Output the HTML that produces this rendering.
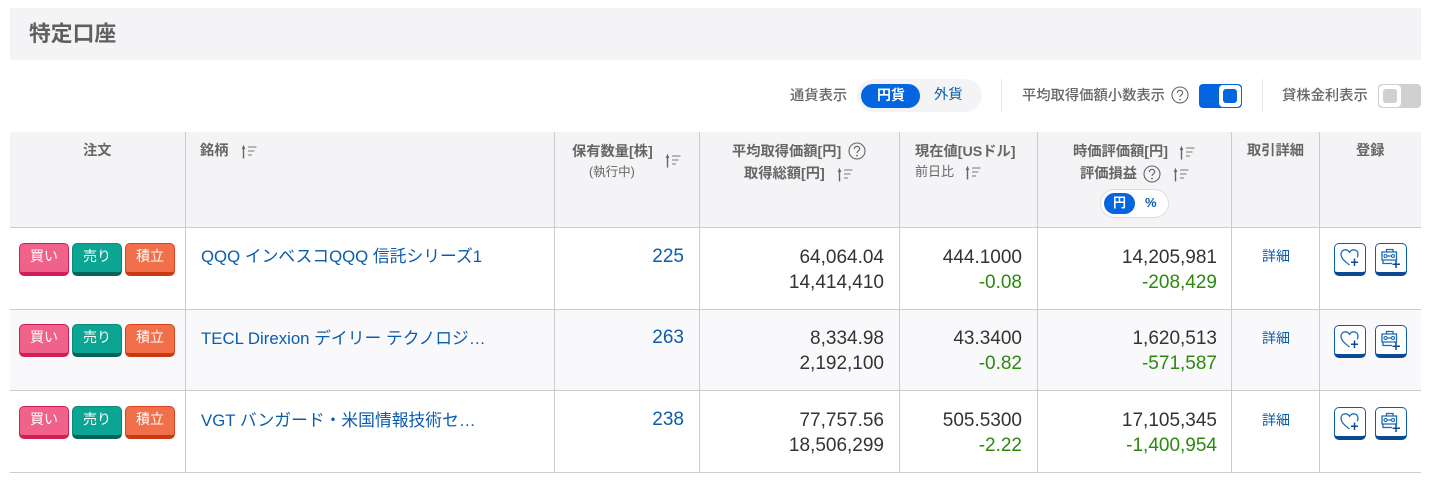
<!DOCTYPE html>
<html lang="ja"><head><meta charset="utf-8"><title>特定口座</title>
<style>
*{box-sizing:border-box}
html,body{margin:0;padding:0;background:#fff}
body{width:1433px;height:482px;position:relative;overflow:hidden;font-family:"Liberation Sans","Noto Sans CJK JP",sans-serif;color:#666}
.a{position:absolute;white-space:nowrap}
.bg{position:absolute}
.v{position:absolute;width:1px;background:#ccc}
.h{position:absolute;left:10px;width:1411px;height:1px;background:#ccc}
.th{font-size:14.25px;font-weight:700;color:#666;line-height:18px}
.sub{font-size:13px;color:#666;line-height:18px;font-weight:400}
.n{font-size:19px;line-height:24px;color:#333;text-align:right;margin-top:2px}
.g{color:#2b8a0e}
.q{color:#0a5cad}
.name{font-size:16.8px;line-height:24px;color:#0a5cad}
.btn{position:absolute;width:50px;height:33px;border-radius:5px;color:#fff;font-size:14px;line-height:25px;text-align:center;border:1px solid;border-bottom-width:4px}
.buy{background:#f06289;border-color:#d01f58}
.sell{background:#0ca492;border-color:#0a8a7c #0a8a7c #05635a}
.acc{background:#f26f4b;border-color:#d8451c #d8451c #c93a12}
.ib{position:absolute;width:32px;height:33px;border:1.5px solid #0a5cad;border-bottom:4px solid #0a4a94;border-radius:5px;background:#fff}
.ib svg{position:absolute;left:3px;top:3px}
.det{font-size:14px;color:#0a5cad;line-height:18px}
.ct{font-size:14.3px;line-height:18px;color:#666;font-weight:500}
</style></head><body>
<svg width="0" height="0" style="position:absolute"><defs>
<symbol id="s" viewBox="0 0 18 15"><path d="M3.500 14.500V3" stroke="#666" stroke-width="1.400"/><path d="M1.700 5L3.500 .8 5.300 5z" fill="#666"/><path d="M8 3h8.500M8 7h6.500M8 11h4" stroke="#777" stroke-width="1" fill="none"/></symbol>
<symbol id="q" viewBox="0 0 18 18"><circle cx="9" cy="9" r="8" fill="none" stroke="#666" stroke-width="1.100"/><path d="M6.300 7c0-1.600 1.200-2.600 2.700-2.600s2.700 1 2.700 2.400c0 2-2.700 2.100-2.700 4.200" fill="none" stroke="#666" stroke-width="1.200"/><circle cx="9" cy="13.600" r=".9" fill="#666"/></symbol>
<symbol id="h" viewBox="0 0 24 24"><path d="M11.500 18C7 14.500 3 11.500 3 7 3 4.500 5 2.800 7.300 2.800c1.800 0 3.200.9 4.200 2.500 1-1.600 2.400-2.500 4.200-2.500 2.300 0 4.300 1.700 4.300 4.200 0 1.200-.3 2.300-.8 3.300" fill="none" stroke="#1c6ab5" stroke-width="1.300"/><path d="M16.500 11.500V19M13 15.200h7" stroke="#0a4a94" stroke-width="1.500"/></symbol>
<symbol id="b" viewBox="0 0 24 24"><path d="M7.500 5V2.500H14V5M3 5h14.500v8H3zM4 13v3.500h9M7 9h7" fill="none" stroke="#1c6ab5" stroke-width="1.300"/><circle cx="6.500" cy="9" r="1.500" fill="#fff" stroke="#1c6ab5" stroke-width="1.100"/><circle cx="14" cy="9" r="1.500" fill="#fff" stroke="#1c6ab5" stroke-width="1.100"/><path d="M17 13.500V21M13.500 17.200H21" stroke="#0a4a94" stroke-width="1.500"/></symbol>
</defs></svg>

<div class="bg" style="left:10px;top:8px;width:1411px;height:52px;background:#f4f4f7"></div>
<div class="a" style="left:29px;top:20px;font-size:21.8px;font-weight:700;line-height:28px;color:#5f5f5f">特定口座</div>

<!-- controls -->
<div class="a ct" style="left:790px;top:87px">通貨表示</div>
<div class="bg" style="left:857px;top:79px;width:125px;height:33px;border-radius:17px;background:#f4f4f7"></div>
<div class="bg" style="left:861px;top:84px;width:59px;height:24px;border-radius:12px;background:#0366e0"></div>
<div class="a" style="left:877px;top:86px;font-size:14px;line-height:18px;color:#fff;font-weight:700">円貨</div>
<div class="a" style="left:934px;top:86px;font-size:14.3px;line-height:18px;color:#0a5cad">外貨</div>
<div class="v" style="left:1001px;top:79px;height:33px;background:#e6e6e6"></div>
<div class="a ct" style="left:1022px;top:87px">平均取得価額小数表示</div>
<svg class="a" style="left:1171px;top:86px" width="18" height="18"><use href="#q"/></svg>
<div class="bg" style="left:1199px;top:84px;width:43px;height:24px;border-radius:4px;background:#0366e0"></div>
<div class="bg" style="left:1219px;top:85px;width:22px;height:22px;border-radius:4px;background:#fff"></div>
<div class="bg" style="left:1223px;top:89px;width:14px;height:14px;border-radius:3px;background:#0366e0"></div>
<div class="v" style="left:1262px;top:79px;height:33px;background:#e6e6e6"></div>
<div class="a ct" style="left:1282px;top:87px">貸株金利表示</div>
<div class="bg" style="left:1378px;top:84px;width:43px;height:24px;border-radius:4px;background:#d0d0d0"></div>
<div class="bg" style="left:1379px;top:85px;width:22px;height:22px;border-radius:4px;background:#fff"></div>
<div class="bg" style="left:1383px;top:89px;width:14px;height:14px;border-radius:3px;background:#d0d0d0"></div>

<!-- table backgrounds -->
<div class="bg" style="left:10px;top:132px;width:1411px;height:95px;background:#f4f4f7"></div>
<div class="bg" style="left:10px;top:310px;width:1411px;height:80px;background:#f9f9fb"></div>
<div class="h" style="top:227px"></div>
<div class="h" style="top:309px"></div>
<div class="h" style="top:390px"></div>
<div class="h" style="top:472px"></div>
<div class="v" style="left:185px;top:132px;height:341px"></div>
<div class="v" style="left:554px;top:132px;height:341px"></div>
<div class="v" style="left:699px;top:132px;height:341px"></div>
<div class="v" style="left:899px;top:132px;height:341px"></div>
<div class="v" style="left:1037px;top:132px;height:341px"></div>
<div class="v" style="left:1231px;top:132px;height:341px"></div>
<div class="v" style="left:1319px;top:132px;height:341px"></div>

<!-- header -->
<div class="a th" style="left:83px;top:142px">注文</div>
<div class="a th" style="left:200px;top:142px">銘柄</div>
<svg class="a" style="left:240px;top:144px" width="18" height="15"><use href="#s"/></svg>
<div class="a th" style="left:572px;top:143px">保有数量[株]</div>
<div class="a sub" style="left:589px;top:163px;font-size:12.500px">(執行中)</div>
<svg class="a" style="left:664px;top:153px" width="18" height="15"><use href="#s"/></svg>
<div class="a th" style="left:732px;top:143px">平均取得価額[円]</div>
<svg class="a" style="left:848px;top:142px" width="18" height="18"><use href="#q"/></svg>
<div class="a th" style="left:744px;top:165px">取得総額[円]</div>
<svg class="a" style="left:836px;top:167px" width="18" height="15"><use href="#s"/></svg>
<div class="a th" style="left:915px;top:143px">現在値[USドル]</div>
<div class="a sub" style="left:915px;top:163px">前日比</div>
<svg class="a" style="left:964px;top:165px" width="18" height="15"><use href="#s"/></svg>
<div class="a th" style="left:1073px;top:143px">時価評価額[円]</div>
<svg class="a" style="left:1178px;top:145px" width="18" height="15"><use href="#s"/></svg>
<div class="a th" style="left:1080px;top:165px">評価損益</div>
<svg class="a" style="left:1143px;top:165px" width="18" height="18"><use href="#q"/></svg>
<svg class="a" style="left:1172px;top:167px" width="18" height="15"><use href="#s"/></svg>
<div class="bg" style="left:1100px;top:189px;width:69px;height:29px;border-radius:15px;background:#fff;border:1px solid #ddd"></div>
<div class="bg" style="left:1104px;top:193px;width:31px;height:21px;border-radius:11px;background:#0366e0"></div>
<div class="a" style="left:1113px;top:194px;font-size:13px;line-height:18px;color:#fff;font-weight:700">円</div>
<div class="a" style="left:1145px;top:194px;font-size:13px;line-height:18px;color:#0a5cad;font-weight:700">%</div>
<div class="a th" style="left:1247px;top:142px">取引詳細</div>
<div class="a th" style="left:1356px;top:142px">登録</div>

<!-- row 1 -->
<div class="btn buy" style="left:19px;top:243px">買い</div>
<div class="btn sell" style="left:72px;top:243px">売り</div>
<div class="btn acc" style="left:125px;top:243px">積立</div>
<div class="a name" style="left:201px;top:245px">QQQ インベスコQQQ 信託シリーズ1</div>
<div class="a n q" style="right:749px;top:243px">225</div>
<div class="a n" style="right:549px;top:244px">64,064.04</div>
<div class="a n" style="right:549px;top:269px">14,414,410</div>
<div class="a n" style="right:411px;top:244px">444.1000</div>
<div class="a n g" style="right:411px;top:269px">-0.08</div>
<div class="a n" style="right:216px;top:244px">14,205,981</div>
<div class="a n g" style="right:216px;top:269px">-208,429</div>
<div class="a det" style="left:1262px;top:247px">詳細</div>
<div class="ib" style="left:1334px;top:243px"><svg width="24" height="24"><use href="#h"/></svg></div>
<div class="ib" style="left:1375px;top:243px"><svg width="24" height="24"><use href="#b"/></svg></div>

<!-- row 2 -->
<div class="btn buy" style="left:19px;top:324px">買い</div>
<div class="btn sell" style="left:72px;top:324px">売り</div>
<div class="btn acc" style="left:125px;top:324px">積立</div>
<div class="a name" style="left:201px;top:327px">TECL Direxion デイリー テクノロジ…</div>
<div class="a n q" style="right:749px;top:324px">263</div>
<div class="a n" style="right:549px;top:325px">8,334.98</div>
<div class="a n" style="right:549px;top:350px">2,192,100</div>
<div class="a n" style="right:411px;top:325px">43.3400</div>
<div class="a n g" style="right:411px;top:350px">-0.82</div>
<div class="a n" style="right:216px;top:325px">1,620,513</div>
<div class="a n g" style="right:216px;top:350px">-571,587</div>
<div class="a det" style="left:1262px;top:329px">詳細</div>
<div class="ib" style="left:1334px;top:325px"><svg width="24" height="24"><use href="#h"/></svg></div>
<div class="ib" style="left:1375px;top:325px"><svg width="24" height="24"><use href="#b"/></svg></div>

<!-- row 3 -->
<div class="btn buy" style="left:19px;top:406px">買い</div>
<div class="btn sell" style="left:72px;top:406px">売り</div>
<div class="btn acc" style="left:125px;top:406px">積立</div>
<div class="a name" style="left:201px;top:409px">VGT バンガード・米国情報技術セ…</div>
<div class="a n q" style="right:749px;top:406px">238</div>
<div class="a n" style="right:549px;top:407px">77,757.56</div>
<div class="a n" style="right:549px;top:432px">18,506,299</div>
<div class="a n" style="right:411px;top:407px">505.5300</div>
<div class="a n g" style="right:411px;top:432px">-2.22</div>
<div class="a n" style="right:216px;top:407px">17,105,345</div>
<div class="a n g" style="right:216px;top:432px">-1,400,954</div>
<div class="a det" style="left:1262px;top:411px">詳細</div>
<div class="ib" style="left:1334px;top:407px"><svg width="24" height="24"><use href="#h"/></svg></div>
<div class="ib" style="left:1375px;top:407px"><svg width="24" height="24"><use href="#b"/></svg></div>
</body></html>
